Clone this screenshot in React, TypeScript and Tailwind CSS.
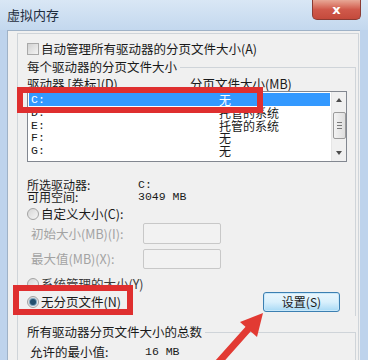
import React from "react";

const cjk = "font-['Noto_Sans_CJK_SC','Liberation_Sans',sans-serif]";
const mono = "font-['Liberation_Mono','Noto_Sans_CJK_SC',monospace]";

function CheckBox() {
  return (
    <span className="w-[12px] h-[12px] shrink-0 border border-[#a9a9a9] bg-linear-to-br from-[#d2d2d2] to-[#f4f4f4]" />
  );
}

function Radio({ checked = false }: { checked?: boolean }) {
  return (
    <span className="w-[12px] h-[12px] shrink-0 rounded-full border border-[#a3a3a3] bg-linear-to-br from-[#d6d6d6] to-[#f6f6f6] flex items-center justify-center">
      {checked && (
        <span className="w-[6px] h-[6px] rounded-full bg-[#24506e] shadow-[0_0_0_1px_#7fa6bf]" />
      )}
    </span>
  );
}

const drives = [
  { name: "D:", size: "托管的系统" },
  { name: "E:", size: "托管的系统" },
  { name: "F:", size: "无" },
  { name: "G:", size: "无" },
];

export default function App() {
  return (
    <div
      className={`relative w-[368px] h-[360px] overflow-hidden bg-[#bed3ec] text-[#1a1a1a] text-[12.5px] ${cjk}`}
    >
      {/* title bar */}
      <div className="h-[30px] flex items-start justify-between bg-linear-to-b from-[#d9e7f5] to-[#c3d8ee]">
        <span className="pl-[7px] pt-[7px] text-[13px] leading-[16px] text-[#1f2d3d]">
          虚拟内存
        </span>
        <div className="mr-[7px] w-[49px] h-[20px] rounded-b-[5px] border border-t-0 border-[#8b3b33] bg-linear-to-b from-[#e7a796] via-[#d0594b] to-[#c44a3c] flex items-center justify-center">
          <span className="text-white text-[13px] font-bold leading-none font-['DejaVu_Sans',sans-serif]">
            x
          </span>
        </div>
      </div>

      <div className="flex h-[330px]">
        <div className="w-[7px]" />
        {/* client */}
        <div className="flex-1 bg-[#f0f0f0] border-l border-t border-[#9fb2c7] flex flex-col">
          <div className="ml-[9px] mt-[2px] mr-[1px] flex-1 border-l border-t border-r border-[#cfd4d9] flex flex-col">
            {/* auto manage */}
            <div className="mt-[8px] ml-[9px] h-[13px] flex items-center gap-[2px]">
              <CheckBox />
              <span className="leading-[13px]">自动管理所有驱动器的分页文件大小(A)</span>
            </div>

            {/* group: each drive */}
            <div className="mt-[12px] mr-[2px] border-t border-r border-[#cfd4d9] flex flex-col">
              <span className="-mt-[8px] w-fit pl-[9px] pr-[3px] bg-[#f0f0f0] leading-[14px]">
                每个驱动器的分页文件大小
              </span>
              <div className="mt-[3px] ml-[9px] h-[13px] flex leading-[13px]">
                <span className="w-[163px]">驱动器 [卷标](D)</span>
                <span>分页文件大小(MB)</span>
              </div>

              {/* listbox */}
              <div className="mt-[1px] ml-[9px] mr-[8px] h-[71px] border border-[#828790] bg-white flex">
                <div className="flex-1 flex flex-col pt-[1px] pl-[1px] pr-[1px] text-[12px]">
                  <div className="h-[13px] bg-[#3399ff] text-white flex items-center leading-[13px]">
                    <span className={`w-[190px] pl-[2px] text-[11.5px] ${mono}`}>C:</span>
                    <span>无</span>
                  </div>
                  <div className="h-[1px]" />
                  {drives.map((d) => (
                    <div key={d.name} className="h-[12.5px] flex items-center leading-[12px]">
                      <span className={`w-[190px] pl-[2px] text-[11.5px] ${mono}`}>{d.name}</span>
                      <span>{d.size}</span>
                    </div>
                  ))}
                </div>
                {/* scrollbar */}
                <div className="w-[15px] bg-[#f0f0f0] border-l border-[#e6e6e6] flex flex-col items-center">
                  <div className="h-[16px] flex items-center justify-center">
                    <span className="w-0 h-0 border-l-[3px] border-r-[3px] border-b-[4px] border-l-transparent border-r-transparent border-b-[#4d4d4d]" />
                  </div>
                  <div className="mt-[4px] w-[13px] h-[27px] rounded-[2px] border border-[#9b9b9b] bg-linear-to-r from-[#f3f3f3] to-[#dedede] flex flex-col items-center justify-center gap-[2px]">
                    <span className="w-[5px] h-[1px] bg-[#7a7a7a]" />
                    <span className="w-[5px] h-[1px] bg-[#7a7a7a]" />
                    <span className="w-[5px] h-[1px] bg-[#7a7a7a]" />
                  </div>
                  <div className="flex-1" />
                  <div className="h-[16px] flex items-center justify-center">
                    <span className="w-0 h-0 border-l-[3px] border-r-[3px] border-t-[4px] border-l-transparent border-r-transparent border-t-[#4d4d4d]" />
                  </div>
                </div>
              </div>

              {/* selected drive info */}
              <div className="mt-[17px] ml-[9px] h-[12px] flex items-center leading-[12px] text-[12px]">
                <span className="w-[111px]">所选驱动器:</span>
                <span className={`text-[11.5px] ${mono}`}>C:</span>
              </div>
              <div className="ml-[9px] h-[12px] flex items-center leading-[12px] text-[12px]">
                <span className="w-[111px]">可用空间:</span>
                <span className={`text-[11.5px] ${mono}`}>3049 MB</span>
              </div>

              {/* custom size */}
              <div className="mt-[4px] ml-[9px] h-[14px] flex items-center gap-[2px]">
                <Radio />
                <span className="leading-[14px]">自定义大小(C):</span>
              </div>
              <div className="mt-[2px] ml-[13px] h-[21px] flex items-center text-[#a3a3a3]">
                <span className="w-[112px] leading-[14px]">初始大小(MB)(I):</span>
                <span className="w-[78px] h-[21px] rounded-[2px] border border-[#c8c8c8] bg-[#f2f2f2]" />
              </div>
              <div className="mt-[5px] ml-[13px] h-[20px] flex items-center text-[#a3a3a3]">
                <span className="w-[112px] leading-[14px]">最大值(MB)(X):</span>
                <span className="w-[78px] h-[20px] rounded-[2px] border border-[#c8c8c8] bg-[#f2f2f2]" />
              </div>

              {/* system managed */}
              <div className="mt-[8px] ml-[9px] h-[14px] flex items-center gap-[2px]">
                <Radio />
                <span className="leading-[14px] text-[#3a3a3a]">系统管理的大小(Y)</span>
              </div>

              {/* no paging file + set */}
              <div className="mt-[1px] ml-[9px] mr-[15px] h-[20px] flex items-center justify-between">
                <div className="flex items-center gap-[2px]">
                  <Radio checked />
                  <span className="leading-[14px]">无分页文件(N)</span>
                </div>
                <button className="w-[77px] h-[20px] rounded-[3px] border border-[#3c7fb1] bg-linear-to-b from-[#eaf6fd] via-[#d9f0fc] to-[#a7d9f5] shadow-[inset_0_0_0_1px_#c8e8fa] text-[12px] leading-[18px] text-[#1a1a1a]">
                  设置(S)
                </button>
              </div>
              <div className="h-[4px]" />
            </div>

            {/* group: total */}
            <div className="mt-[16px] mr-[2px] flex-1 border-t border-r border-[#cfd4d9] flex flex-col">
              <span className="-mt-[8px] w-fit pl-[9px] pr-[3px] bg-[#f0f0f0] leading-[14px]">
                所有驱动器分页文件大小的总数
              </span>
              <div className="mt-[6px] ml-[12px] h-[14px] flex items-center leading-[14px]">
                <span className="w-[115px]">允许的最小值:</span>
                <span className={`text-[11.5px] ${mono}`}>16 MB</span>
              </div>
            </div>
          </div>
        </div>
        <div className="w-[8px]" />
      </div>

      {/* annotation overlays */}
      <div className="absolute left-[17px] top-[87px] w-[246px] h-[26px] border-[6px] border-[#df2f2f]" />
      <div className="absolute left-[13px] top-[285px] w-[120px] h-[30px] border-[6px] border-[#df2f2f]" />
      <svg className="absolute left-0 top-0" width="368" height="360" viewBox="0 0 368 360">
        <line x1="217" y1="364" x2="250" y2="327" stroke="#e23a33" strokeWidth="7" strokeLinecap="round" />
        <polygon points="263,313 257,337 240,322" fill="#e23a33" />
      </svg>
    </div>
  );
}
